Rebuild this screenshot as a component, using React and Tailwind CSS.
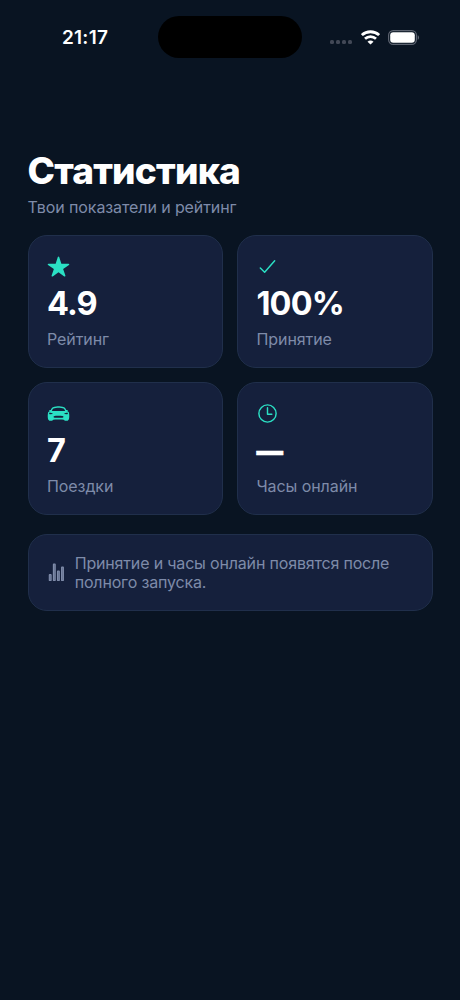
import { IoCarSport, IoCheckmarkOutline, IoStar, IoStatsChartOutline, IoTimeOutline } from 'react-icons/io5';

const stats = [
  { icon: IoStar, value: '4.9', label: 'Рейтинг' },
  { icon: IoCheckmarkOutline, value: '100%', label: 'Принятие' },
  { icon: IoCarSport, value: '7', label: 'Поездки' },
  { icon: IoTimeOutline, value: '—', label: 'Часы онлайн' },
];

function StatusBar() {
  return (
    <div className="flex h-[58px] items-start pt-4">
      <div className="w-[158px] pl-[62px] pt-2 text-[19px] font-semibold leading-7 tracking-[0.25px] text-white">
        21:17
      </div>
      <div className="h-[42px] w-[144px] rounded-full bg-black" />
      <div className="ml-7 flex h-[42px] items-center">
        {/* no signal */}
        <div className="mt-[10px] flex gap-[2px]">
          <span className="size-1 rounded-[1.5px] bg-[#424856]" />
          <span className="size-1 rounded-[1.5px] bg-[#424856]" />
          <span className="size-1 rounded-[1.5px] bg-[#424856]" />
          <span className="size-1 rounded-[1.5px] bg-[#424856]" />
        </div>
        {/* wifi */}
        <svg className="ml-[9px] h-[15px] w-[19px]" viewBox="0 0 19 15" fill="none" stroke="white" strokeWidth="2.8">
          <path d="M.9 5.1C5.7.6 13.3.6 18.1 5.1" />
          <path d="M4 8.7C7.1 5.8 11.9 5.8 15 8.7" />
          <path d="M9.5 14.6 6.5 11.7C8.1 10.1 10.9 10.1 12.5 11.7Z" fill="white" stroke="none" />
        </svg>
        {/* battery */}
        <svg className="ml-2 h-[15px] w-8" viewBox="0 0 32 15" fill="none">
          <rect x="0.6" y="0.6" width="27.8" height="13.8" rx="4.6" stroke="#5c6370" strokeWidth="1.2" />
          <rect x="2.2" y="2.2" width="24.6" height="10.6" rx="3" fill="white" />
          <path d="M29.7 5.2c1.8.7 1.8 3.9 0 4.6z" fill="#5c6370" />
        </svg>
      </div>
    </div>
  );
}

function StatCard({ icon: Icon, value, label }) {
  return (
    <div className="h-[133px] rounded-[19px] border border-[#202f4b] bg-[#15203c] px-[18.5px] pt-[18.5px]">
      <Icon className="-ml-[0.5px] size-[23px] text-[#2be0c4]" />
      <div className="mt-[6.5px] h-10 text-[32.5px] font-bold leading-10 tracking-[-0.9px] text-white">
        {/* the dash of an empty value is shorter and heavier than the digits' own */}
        {value === '—' ? (
          <span className="align-[1px] text-[26.5px] font-black tracking-normal [-webkit-text-stroke:0.6px_white]">{value}</span>
        ) : (
          value
        )}
      </div>
      <div className="mt-[4.5px] text-[16px] leading-5 tracking-[-0.08px] text-[#7e8ba9]">{label}</div>
    </div>
  );
}

export default function App() {
  return (
    <main className="min-h-screen bg-[#091422] font-['Inter',sans-serif]">
      <StatusBar />

      <section className="px-[27.5px] pt-[91px]">
        <h1 className="text-[37px] font-extrabold leading-[44px] tracking-[-0.8px] text-white">Статистика</h1>
        <p className="mt-1 text-[16px] leading-5 tracking-[-0.1px] text-[#7e8ba9]">Твои показатели и рейтинг</p>

        <div className="mt-[18px] grid grid-cols-2 gap-[14px]">
          {stats.map((item) => (
            <StatCard key={item.label} {...item} />
          ))}
        </div>

        <div className="mt-[18.5px] flex h-[77px] items-center gap-[9px] rounded-[19px] border border-[#202f4b] bg-[#15203c] px-[18.5px]">
          <IoStatsChartOutline className="size-[18.7px] shrink-0 text-[#7e8ba9] [&_*]:fill-[#5f6c8a]" />
          <p className="pt-[2px] text-[16px] leading-[19.5px] tracking-[-0.17px] text-[#7e8ba9]">
            Принятие и часы онлайн появятся после
            <br />
            полного запуска.
          </p>
        </div>
      </section>
    </main>
  );
}
